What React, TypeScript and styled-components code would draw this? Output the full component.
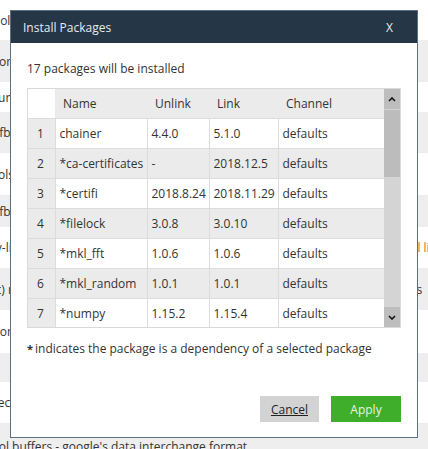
import React from "react";
import styled, { createGlobalStyle } from "styled-components";

const GlobalStyle = createGlobalStyle`
  html, body {
    margin: 0;
    padding: 0;
  }
  body {
    font-family: "Open Sans", "Noto Sans", sans-serif;
    font-size: 12px;
    color: #333;
    background: #fff;
    overflow: hidden;
  }
`;

const Screen = styled.div`
  position: relative;
  width: 428px;
  height: 449px;
  overflow: hidden;
`;

// package list sitting behind the modal
const BackList = styled.div`
  display: flex;
  flex-direction: column;
  margin-left: -38px;
`;

const BackRow = styled.div<{ $h: number; $alt: boolean }>`
  display: flex;
  align-items: center;
  height: ${(p) => p.$h}px;
  flex: none;
  background: ${(p) => (p.$alt ? "#eeeeee" : "#ffffff")};
  white-space: nowrap;
`;

const BackDesc = styled.span`
  flex: none;
  width: 441px;
  overflow: hidden;
`;

const BackExtra = styled.span<{ $link?: boolean }>`
  color: ${(p) => (p.$link ? "#c8791c" : "#333")};
`;

const Dialog = styled.div`
  position: absolute;
  left: 10px;
  top: 10px;
  width: 408px;
  height: 428px;
  box-sizing: border-box;
  border: 1px solid #5b7083;
  background: #fff;
  display: flex;
  flex-direction: column;
`;

const TitleBar = styled.div`
  flex: none;
  height: 32px;
  background: #253646;
  color: #e6ebef;
  display: flex;
  align-items: center;
  justify-content: space-between;
  padding: 0 24px 0 12px;
  font-size: 12px;
`;

const Body = styled.div`
  flex: 1;
  display: flex;
  flex-direction: column;
  padding: 17px 16px 15px 16px;
`;

const Summary = styled.div`
  line-height: 18px;
  margin-bottom: 10px;
`;

const TableFrame = styled.div`
  display: flex;
  width: 374px;
  height: 240px;
  box-sizing: border-box;
  border: 1px solid #d9d9d9;
`;

const TableClip = styled.div`
  width: 356px;
  overflow: hidden;
`;

const Grid = styled.table`
  width: 356px;
  border-collapse: collapse;
  table-layout: fixed;
  white-space: nowrap;
`;

const HeadCell = styled.th<{ $blank?: boolean }>`
  height: 29px;
  padding: 0 0 0 8px;
  text-align: left;
  font-weight: normal;
  background: ${(p) => (p.$blank ? "#ffffff" : "#ebebeb")};
  border-bottom: 1px solid #dcdcdc;
`;

const Cell = styled.td<{ $index?: boolean; $alt?: boolean }>`
  height: 29px;
  padding: 0 0 0 ${(p) => (p.$index ? 9 : 4)}px;
  overflow: hidden;
  border: 1px solid #dcdcdc;
  border-top: none;
  background: ${(p) => (p.$index || p.$alt ? "#ebebeb" : "#ffffff")};
  &:first-child {
    border-left: none;
  }
  &:last-child {
    border-right: none;
  }
`;

const ScrollBar = styled.div`
  width: 16px;
  display: flex;
  flex-direction: column;
  background: #d4d4d4;
`;

const ScrollButton = styled.div`
  flex: none;
  height: 20px;
  background: #bdbdbd;
  display: flex;
  align-items: center;
  justify-content: center;
`;

const Thumb = styled.div`
  flex: none;
  height: 67px;
  margin-top: 1px;
  background: #bcbcbc;
`;

const Track = styled.div`
  flex: 1;
`;

const Note = styled.div`
  margin-top: 12px;
  line-height: 18px;
`;

const Star = styled.b`
  font-size: 11px;
  margin-right: 2px;
`;

const Actions = styled.div`
  margin-top: auto;
  display: flex;
  justify-content: flex-end;
  gap: 12px;
`;

const Button = styled.button<{ $primary?: boolean }>`
  height: 26px;
  width: ${(p) => (p.$primary ? 70 : 59)}px;
  border: none;
  padding: 0;
  font-family: inherit;
  font-size: 12px;
  cursor: pointer;
  background: ${(p) => (p.$primary ? "#3fae2b" : "#d3d3d3")};
  color: ${(p) => (p.$primary ? "#e8f4e4" : "#222")};
  text-decoration: ${(p) => (p.$primary ? "none" : "underline")};
`;

const Chevron = ({ up }: { up?: boolean }) => (
  <svg width="8" height="5" viewBox="0 0 8 5">
    <polyline
      points={up ? "1,4 4,1 7,4" : "1,1 4,4 7,1"}
      fill="none"
      stroke="#111"
      strokeWidth="1.6"
    />
  </svg>
);

const backRows = [
  { h: 40, text: "the whole notebook console" },
  { h: 42, text: "Tools for working with iterables" },
  { h: 30, text: "Basic function helpers" },
  { h: 41, text: "The libfbr runtime" },
  { h: 42, text: "Dev tools for python" },
  { h: 32, text: "The libfbr bindings" },
  { h: 41, text: "Lib dev-libs for tensors", extra: "full list", link: true },
  { h: 42, text: "Base (c) runtime", extra: "libs" },
  { h: 43, text: "Big records storage" },
  { h: 29, text: "" },
  { h: 41, text: "An object recursion helper" },
  { h: 46, text: "protocol buffers - google's data interchange format" },
];

const packages = [
  ["chainer", "4.4.0", "5.1.0", "defaults"],
  ["*ca-certificates", "-", "2018.12.5", "defaults"],
  ["*certifi", "2018.8.24", "2018.11.29", "defaults"],
  ["*filelock", "3.0.8", "3.0.10", "defaults"],
  ["*mkl_fft", "1.0.6", "1.0.6", "defaults"],
  ["*mkl_random", "1.0.1", "1.0.1", "defaults"],
  ["*numpy", "1.15.2", "1.15.4", "defaults"],
];

const App = () => {
  return (
    <Screen>
      <GlobalStyle />
      <BackList>
        {backRows.map((r, i) => (
          <BackRow key={i} $h={r.h} $alt={i % 2 === 1}>
            <BackDesc>{r.text}</BackDesc>
            {r.extra && <BackExtra $link={r.link}>{r.extra}</BackExtra>}
          </BackRow>
        ))}
      </BackList>

      <Dialog>
        <TitleBar>
          <span>Install Packages</span>
          <span>X</span>
        </TitleBar>
        <Body>
          <Summary>17 packages will be installed</Summary>
          <TableFrame>
            <TableClip>
              <Grid>
                <colgroup>
                  <col style={{ width: 27 }} />
                  <col style={{ width: 92 }} />
                  <col style={{ width: 62 }} />
                  <col style={{ width: 69 }} />
                  <col style={{ width: 106 }} />
                </colgroup>
                <thead>
                  <tr>
                    <HeadCell $blank />
                    <HeadCell>Name</HeadCell>
                    <HeadCell>Unlink</HeadCell>
                    <HeadCell>Link</HeadCell>
                    <HeadCell>Channel</HeadCell>
                  </tr>
                </thead>
                <tbody>
                  {packages.map((p, i) => (
                    <tr key={p[0]}>
                      <Cell $index>{i + 1}</Cell>
                      {p.map((v, j) => (
                        <Cell key={j} $alt={i % 2 === 1}>
                          {v}
                        </Cell>
                      ))}
                    </tr>
                  ))}
                </tbody>
              </Grid>
            </TableClip>
            <ScrollBar>
              <ScrollButton>
                <Chevron up />
              </ScrollButton>
              <Thumb />
              <Track />
              <ScrollButton>
                <Chevron />
              </ScrollButton>
            </ScrollBar>
          </TableFrame>
          <Note>
            <Star>*</Star>indicates the package is a dependency of a selected
            package
          </Note>
          <Actions>
            <Button>Cancel</Button>
            <Button $primary>Apply</Button>
          </Actions>
        </Body>
      </Dialog>
    </Screen>
  );
};

export default App;
